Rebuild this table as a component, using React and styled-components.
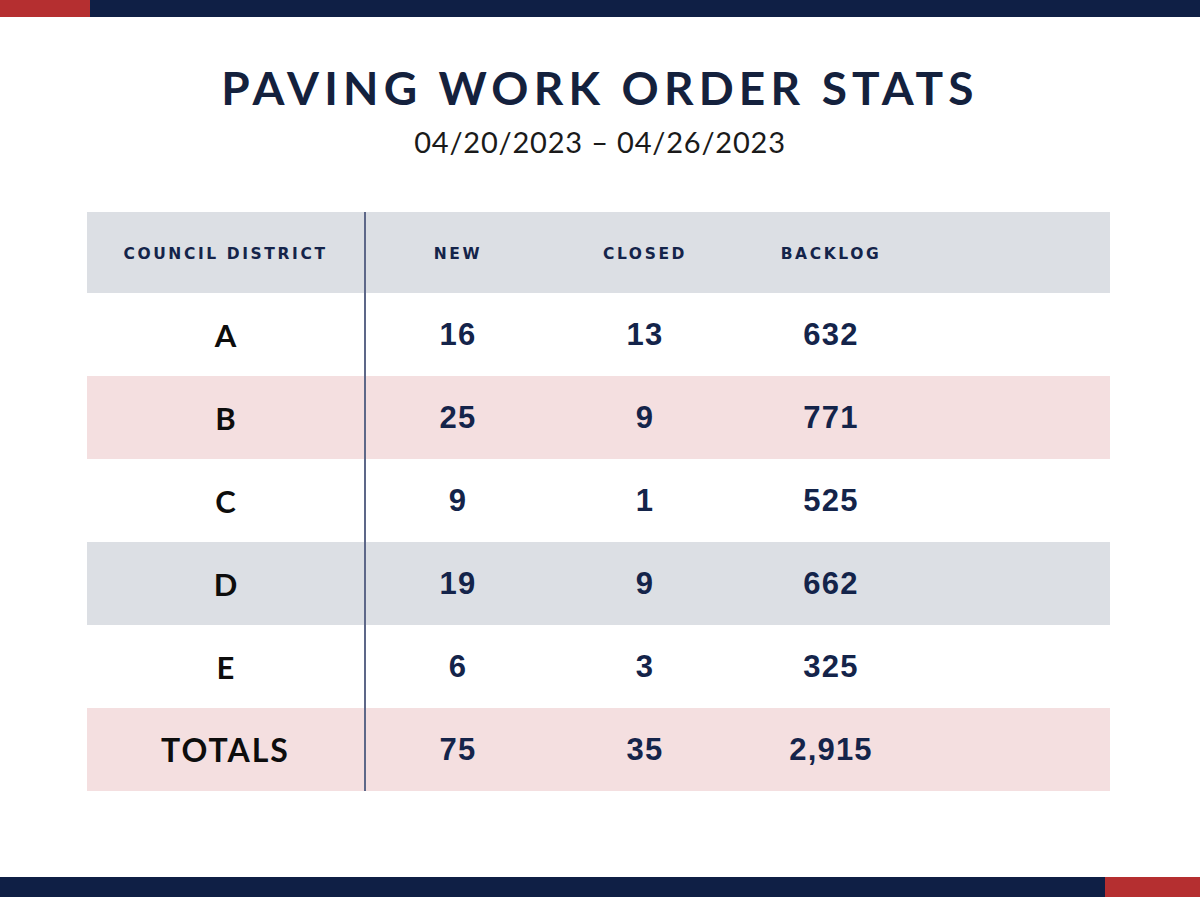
import styled, { createGlobalStyle } from "styled-components";

const GlobalStyle = createGlobalStyle`
  html, body {
    margin: 0;
    padding: 0;
    background: #ffffff;
  }
  body {
    font-family: "Lato", "Liberation Sans", sans-serif;
  }
`;

const rows = [
  { district: "A", newCount: "16", closed: "13", backlog: "632", tone: "white" },
  { district: "B", newCount: "25", closed: "9", backlog: "771", tone: "pink" },
  { district: "C", newCount: "9", closed: "1", backlog: "525", tone: "white" },
  { district: "D", newCount: "19", closed: "9", backlog: "662", tone: "gray" },
  { district: "E", newCount: "6", closed: "3", backlog: "325", tone: "white" },
  { district: "TOTALS", newCount: "75", closed: "35", backlog: "2,915", tone: "pink", total: true },
];

const tones = {
  white: "#ffffff",
  pink: "#f4dfe0",
  gray: "#dcdfe4",
};

// 페이지 틀
const Page = styled.div`
  width: 1200px;
  height: 897px;
  display: flex;
  flex-direction: column;
  background: #ffffff;
`;

const StripeBar = styled.div`
  display: flex;
  height: ${({ $height }) => $height}px;
  flex-direction: ${({ $flip }) => ($flip ? "row-reverse" : "row")};
  margin-top: ${({ $bottom }) => ($bottom ? "auto" : "0")};
`;

const StripeRed = styled.div`
  width: ${({ $width }) => $width}px;
  background: #b52f30;
`;

const StripeNavy = styled.div`
  flex: 1;
  background: #0f1f45;
`;

const Header = styled.header`
  display: flex;
  flex-direction: column;
  align-items: center;
  padding-top: 43px;
`;

const Title = styled.h1`
  margin: 0;
  font-family: "Lato", sans-serif;
  font-weight: 700;
  font-size: 46px;
  line-height: 56px;
  letter-spacing: 5.2px;
  color: #14213d;
`;

const DateRange = styled.p`
  margin: 9px 0 0;
  font-family: "Lato", sans-serif;
  font-weight: 400;
  font-size: 29px;
  line-height: 34px;
  letter-spacing: 0.8px;
  color: #1a1a1a;
`;

// 표
const Table = styled.div`
  margin: 53px 90px 0 87px;
  display: grid;
  grid-template-columns: 279px 184px 190px 182px 1fr;
`;

const Row = styled.div`
  display: contents;
`;

const Cell = styled.div`
  height: ${({ $height }) => $height}px;
  display: flex;
  align-items: center;
  justify-content: center;
  padding-top: ${({ $head }) => ($head ? "3px" : "0")};
  background: ${({ $tone }) => tones[$tone]};
  box-sizing: border-box;
  ${({ $divider }) => $divider && `border-right: 2px solid #5d6788;`}
`;

const HeadLabel = styled.span`
  font-family: "DejaVu Sans", sans-serif;
  font-weight: 700;
  font-size: 15.5px;
  letter-spacing: 2.6px;
  color: #14244a;
`;

const DistrictLabel = styled.span`
  font-family: "Lato", sans-serif;
  font-weight: 700;
  font-size: ${({ $total }) => ($total ? "32px" : "31px")};
  letter-spacing: ${({ $total }) => ($total ? "2px" : "0")};
  color: #0d0d0d;
`;

const Value = styled.span`
  font-family: "Liberation Sans", Arial, sans-serif;
  font-weight: 700;
  font-size: 31px;
  letter-spacing: 1.2px;
  color: #14244a;
`;

export default function App() {
  return (
    <Page>
      <GlobalStyle />
      <StripeBar $height={17}>
        <StripeRed $width={90} />
        <StripeNavy />
      </StripeBar>

      <Header>
        <Title>PAVING WORK ORDER STATS</Title>
        <DateRange>04/20/2023 – 04/26/2023</DateRange>
      </Header>

      <Table>
        <Row>
          <Cell $tone="gray" $height={81} $head $divider>
            <HeadLabel>COUNCIL DISTRICT</HeadLabel>
          </Cell>
          <Cell $tone="gray" $height={81} $head>
            <HeadLabel>NEW</HeadLabel>
          </Cell>
          <Cell $tone="gray" $height={81} $head>
            <HeadLabel>CLOSED</HeadLabel>
          </Cell>
          <Cell $tone="gray" $height={81} $head>
            <HeadLabel>BACKLOG</HeadLabel>
          </Cell>
          <Cell $tone="gray" $height={81} />
        </Row>
        {rows.map((r) => (
          <Row key={r.district}>
            <Cell $tone={r.tone} $height={83} $divider>
              <DistrictLabel $total={r.total}>{r.district}</DistrictLabel>
            </Cell>
            <Cell $tone={r.tone} $height={83}>
              <Value>{r.newCount}</Value>
            </Cell>
            <Cell $tone={r.tone} $height={83}>
              <Value>{r.closed}</Value>
            </Cell>
            <Cell $tone={r.tone} $height={83}>
              <Value>{r.backlog}</Value>
            </Cell>
            <Cell $tone={r.tone} $height={83} />
          </Row>
        ))}
      </Table>

      <StripeBar $height={20} $flip $bottom>
        <StripeRed $width={95} />
        <StripeNavy />
      </StripeBar>
    </Page>
  );
}
